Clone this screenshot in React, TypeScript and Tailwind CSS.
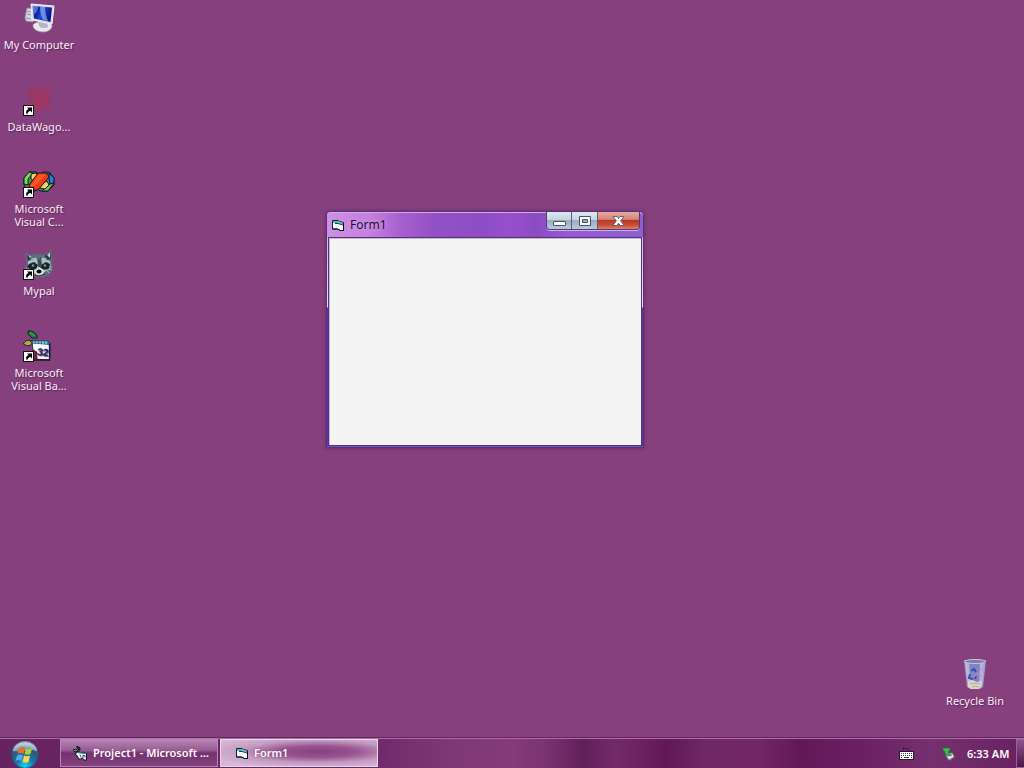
import type { ReactNode } from "react";

function ShortcutArrow() {
  return (
    <g>
      <rect x="0.5" y="21.5" width="10" height="10" fill="#fff" stroke="#111" />
      <path d="M4 23.500h5v5l-1.700-1.700c-2 .8-2.800 2-3 3.700-2-2.300-1.300-4.200 1.200-5.500z" fill="#000" />
    </g>
  );
}

function ComputerIcon() {
  return (
    <svg viewBox="0 0 32 32" className="size-8" aria-hidden="true">
      <defs>
        <linearGradient id="screen" x1="0" x2="1" y2="0.3">
          <stop offset="0" stopColor="#3d62cf" />
          <stop offset="0.3" stopColor="#0a22a4" />
          <stop offset="0.55" stopColor="#1c46d2" />
          <stop offset="1" stopColor="#06188a" />
        </linearGradient>
      </defs>
      <path d="M4 6l6 1v13l-7-1-1-3z" fill="#d5d6e2" stroke="#9d92b0" strokeWidth="0.8" />
      <path d="M4 9l4 1M4 12l4 1M3 16l5 1" stroke="#858297" strokeWidth="0.8" />
      <path d="M10 24c0-3 4-4 9-4s10 1 10 4-4 6-9 6-10-3-10-6z" fill="#e8e8ef" stroke="#a49fb5" strokeWidth="0.7" />
      <path d="M15 19l9 1 1 5c-3 2-8 1-9-1z" fill="#b9b5c4" />
      <path d="M8 2l23 2-2 18L9 18z" fill="#d9dcee" stroke="#f0edf8" />
      <path d="M9.500 4L29 5.500 27.500 20 11 16.500z" fill="url(#screen)" />
      <path d="M17 4.600l5 .4c0 5 1 9 3 14l-5-1c-2-4-3-8-3-13.400z" fill="#a9c4f5" opacity=".6" />
      <path d="M9.500 4l6 .5-2 6-3 2z" fill="#8faaf0" opacity=".5" />
    </svg>
  );
}

function WagonIcon() {
  return (
    <svg viewBox="0 0 32 32" className="size-8" aria-hidden="true">
      <g fill="none" stroke="#b5304a" strokeWidth="1.300" opacity=".65">
        <circle cx="17" cy="16" r="10" strokeDasharray="4 1" />
        <circle cx="17" cy="16" r="6" />
        <path d="M6 6l22 20M28 5L7 26M5 16h24M17 3v26M6 4h20M6 4v6M26 4v5" />
      </g>
      <path d="M8 11l8-6 9 5 2 10-9 7-9-5z" fill="#b02c4a" opacity=".22" />
      <ShortcutArrow />
    </svg>
  );
}

function VisualCIcon() {
  return (
    <svg viewBox="0 0 32 32" className="size-8" aria-hidden="true">
      <g stroke="#14142c" strokeWidth="1" strokeLinejoin="round">
        <path d="M6 6h7l6 5-1 8-6 6H6l-5-6v-7z" fill="#2fa44d" />
        <path d="M20 6h6l5 6v7l-6 6h-8l-5-5 3-8z" fill="#2fa44d" />
        <path d="M6 6l4 1-5 6v6l-4-1v-6z" fill="#7ddc4f" />
        <path d="M26 7l5 5v5l-4 1-1-5z" fill="#2b7cd4" />
        <path d="M31 17l-6 8h-6l6-6 2-1z" fill="#68cf48" />
        <path d="M8 8l5-1 5 5-5 5-5-4z" fill="#f9cf72" />
        <path d="M18 18l6-3 2 4-4 4-6-1z" fill="#f9cf72" />
        <path d="M15 7h9l2 4-11 13H7l-1-5z" fill="#ef3a16" />
      </g>
      <path d="M16 8.500h7L12 20H7.500z" fill="#ff5a25" />
      <ShortcutArrow />
    </svg>
  );
}

function RaccoonIcon() {
  return (
    <svg viewBox="0 0 32 32" className="size-8" aria-hidden="true">
      <path d="M2 5l7 2c5-2 9-1 12 0l7-6 1 9 1 10-4 7-9 3-8-3-5-7z" fill="#5b6e80" />
      <path d="M4 7l5 2-4 5zM22 8l5-5 1 8-4 1z" fill="#253c45" />
      <path d="M5 7l4 2-2 1zM24 7l3-3v6z" fill="#c2cad0" />
      <path d="M5 13l9-3 2 3 3-3 8 3 1 7-8 5-10 1-5-5z" fill="#aebdc2" />
      <path d="M6 16l5-2 4 3-2 4-5 1-4-3zM18 17l5-3 4 2-1 5-6 1-3-2z" fill="#14252c" />
      <path d="M14 9l2 3 2-3 1 8-2 5-2-4z" fill="#394d57" />
      <path d="M11 23l5-4 5 3-1 5-6 1z" fill="#e0e2dc" />
      <ellipse cx="16" cy="23.500" rx="2.500" ry="2" fill="#070c10" />
      <circle cx="10" cy="17.500" r="1.200" fill="#8d9b67" />
      <circle cx="22" cy="17.500" r="1.200" fill="#8d9b67" />
      <path d="M8 11l5-1M19 10l5 1M4 19l-2 3M5 21l-1 3M25 21l4 1M24 23l3 2" stroke="#c9d4d8" strokeWidth="0.7" />
      <path d="M12 27l4 1 6-2" stroke="#24343e" fill="none" />
      <ShortcutArrow />
    </svg>
  );
}

function VisualBasicIcon() {
  return (
    <svg viewBox="0 0 32 32" className="size-8" aria-hidden="true">
      <path d="M5 1h4l5 4v3H9L5 4z" fill="#1d7b3c" stroke="#102020" />
      <path d="M7 3l5 3" stroke="#53aa5b" />
      <path d="M0.500 14c1-4 6-5 9-2-1 4-5 5-9 2z" fill="#b5a746" stroke="#172317" />
      <path d="M9 11l18 2v17l-16-1z" fill="#fafaff" stroke="#152039" strokeWidth=".8" />
      <path d="M7 11h18l2 3.500-18-1.500z" fill="#19a3b7" stroke="#0c2740" strokeWidth=".7" />
      <path d="M11 11v2M14 11v2.500M17 11v2.500M20 11v3M23 11v3" stroke="#e6f6ff" strokeWidth=".8" />
      <path d="M26.500 14v16H12" fill="none" stroke="#111a30" strokeWidth="1.300" />
      <path d="M10 20l4 2v7l-3 2z" fill="#861c3f" stroke="#1b1720" strokeWidth=".7" />
      <text x="14" y="25" transform="rotate(5 14 25)" fontSize="10" fontFamily="Liberation Sans, sans-serif" fontWeight="700" fill="#16205c">32</text>
      <path d="M28 25l4 3-5 2z" fill="#6f4a76" />
      <ShortcutArrow />
    </svg>
  );
}

function RecycleIcon() {
  return (
    <svg viewBox="0 0 32 32" className="size-8" aria-hidden="true">
      <path d="M5 2h22l-3 27-3 2h-9l-4-2z" fill="#a3a2cf" />
      <path d="M7 4h18l-3 24-9 1z" fill="#8285bf" />
      <path d="M6 4l4 1 2 22-3-1zM25 4l-4 1-1 23 3-2z" fill="#c5c0df" opacity=".75" />
      <ellipse cx="16" cy="3.500" rx="10.500" ry="2" fill="#8278a5" stroke="#c9c4de" strokeWidth="1" />
      <path d="M9 23l4-1 5 2 5-1-1 6-3 2h-7l-3-2z" fill="#d9d8ca" />
      <path d="M11 25l3 1 3-1 4 1M13 29l3-1 4 1" stroke="#aaa995" fill="none" />
      <path d="M12 13l3-2 2 3M11 16l-1 4 4 1M17 18l-1 3" fill="none" stroke="#3a4fae" strokeWidth="2" />
      <path d="M23 10l-5 6 4 2M17 17l-3 2" fill="none" stroke="#b98fc7" />
    </svg>
  );
}

function FormIcon() {
  return (
    <svg viewBox="0 0 14 14" className="size-3.5 shrink-0" aria-hidden="true">
      <path d="M1.500 2.500h6l1 1 4 1v8h-3l-3-1.500h-5z" fill="#f7fbff" stroke="#082329" />
      <path d="M2 3h5l1 1 4 1v1.500L7 5H2z" fill="#4db9bd" />
      <path d="M4 5.500h3l5 1.500" fill="none" stroke="#123c45" />
      <path d="M12.500 5v7.500h-3l-3-1.500h-5" fill="none" stroke="#050d15" />
    </svg>
  );
}

function ProjectIcon() {
  return (
    <svg viewBox="0 0 14 16" className="h-4 w-3.5 shrink-0" aria-hidden="true">
      <path d="M4 1l3 2v2L4 3z" fill="#26463b" stroke="#11151b" />
      <path d="M0 5l3-1 2 2-3 1zM6 4v4" fill="#8f9851" stroke="#11151b" />
      <path d="M3.500 7l10 1.500V15h-3l-1-2-2 1H5.500l-1-3-2-1z" fill="#f7f7ff" stroke="#0c1422" />
      <path d="M4 7.500l9 1" stroke="#348698" strokeWidth="1" />
      <path d="M7 9.500l1 3M10 10v3M10 10.500h2v2" fill="none" stroke="#172a3a" strokeWidth=".8" />
    </svg>
  );
}

function WindowsOrb() {
  return (
    <svg viewBox="0 0 30 30" className="size-[30px]" aria-hidden="true">
      <defs>
        <radialGradient id="orb" cx=".5" cy=".9" r=".8">
          <stop offset="0" stopColor="#1ad2ee" />
          <stop offset=".4" stopColor="#1578ae" />
          <stop offset=".8" stopColor="#355272" />
          <stop offset="1" stopColor="#a5c2cc" />
        </radialGradient>
      </defs>
      <circle cx="15" cy="16" r="13.500" fill="url(#orb)" stroke="#284766" />
      <path d="M3 12a12 10 0 0124 0c-8-3-16 2-24 0z" fill="#c2dae1" opacity=".5" />
      <path d="M9 9c2-1.500 4-1.500 6 0l-1.500 6c-2-1.500-4-1.500-6 0z" fill="#ed6936" />
      <path d="M16 9.500c2 1 4 1 6 0L20.500 15c-2 1-4 1-6 0z" fill="#a5d33a" />
      <path d="M7 16.500c2-1.500 4-1.500 6 0L11.500 22c-2-1.500-4-1-6 0z" fill="#53a9ed" />
      <path d="M14 16.500c2 1 4 1 6 0L18.500 23c-2 1-4 1-6 0z" fill="#ffd449" />
    </svg>
  );
}

function DesktopIcon({ children, lines }: { children: ReactNode; lines: string[] }) {
  return (
    <button type="button" className="flex h-[82px] w-[78px] flex-col items-center gap-1 pt-0.5 text-[11px] leading-[13px] whitespace-nowrap text-[#fbeefa] [text-shadow:1px_1px_1px_#572452]">
      {children}
      <span>
        {lines.map((line) => <span key={line} className="block">{line}</span>)}
      </span>
    </button>
  );
}

function FormWindow() {
  return (
    <section aria-label="Form1" className="absolute top-[211px] left-[326px] flex h-[237px] w-[318px] flex-col rounded-t-[5px] border border-[#57307e] bg-[#7548b1] shadow-[0_0_3px_1px_rgba(90,35,95,0.45)]">
      <header className="flex h-[25px] shrink-0 items-start justify-between rounded-t-[4px] bg-[linear-gradient(90deg,#cf90e4_0%,#c37fdc_14%,#a860cf_23%,#9251c4_34%,#8e4dc6_50%,#9850cc_58%,#8a4cc3_66%,#9c59d4_78%,#8e60cd_100%)] pr-[3px] pl-1 shadow-[inset_0_1px_0_#d5aaee]">
        <div className="flex h-[26px] items-center gap-[5px]">
          <FormIcon />
          <h1 className="text-[12px] leading-4 text-[#170c37] [text-shadow:0_0_4px_#dfb1ee]">Form1</h1>
        </div>
        <div className="flex h-[18px] overflow-hidden rounded-b-[4px] border border-t-0 border-[#4b3c73] shadow-[0_1px_0_#cbb3ed]">
          <button type="button" aria-label="Minimize" className="flex w-[25px] items-center justify-center border-r border-[#54627f] bg-[linear-gradient(180deg,#dee8f0_0%,#c6d3e2_45%,#9cacc5_50%,#bac9dc_100%)]">
            <svg viewBox="0 0 13 12" className="h-3 w-[13px]" aria-hidden="true"><rect x="0.500" y="6.500" width="12" height="4" rx="0.500" fill="#fff" stroke="#4b5268" /></svg>
          </button>
          <button type="button" aria-label="Maximize" className="flex w-[26px] items-center justify-center border-r border-[#54627f] bg-[linear-gradient(180deg,#dee8f0_0%,#c6d3e2_45%,#9cacc5_50%,#bac9dc_100%)]">
            <svg viewBox="0 0 12 10" className="h-2.5 w-3" aria-hidden="true"><path d="M.5.5h11v9H.5zM3.500 3.500v3h5v-3z" fill="#fff" fillRule="evenodd" stroke="#4b5268" /></svg>
          </button>
          <button type="button" aria-label="Close" className="flex w-[41px] items-center justify-center bg-[linear-gradient(180deg,#e7aaa0_0%,#d68578_43%,#b73a2b_50%,#c74b34_75%,#e18360_100%)]">
            <svg viewBox="0 0 13 10" className="h-2.5 w-[13px]" aria-hidden="true"><path d="M1 .5h4L6.500 2.500 8 .5h4L8.600 4.800 12.200 9.500H8.200L6.500 7.200 4.800 9.500H.8L4.400 4.800z" fill="#fff" stroke="#55576d" strokeWidth=".9" /></svg>
          </button>
        </div>
      </header>
      <div className="flex min-h-0 flex-1 bg-[linear-gradient(180deg,#d8b8e8_0px,#f0dff5_70px,#6134a5_71px,#6134a5_100%)] px-px">
        <div className="flex flex-1 border border-[#51317d] bg-[#c8b9d8] pt-px pl-px">
          <div className="flex-1 bg-[#f4f4f4]" />
        </div>
      </div>
      <div className="h-px shrink-0 bg-[#7958bd]" />
    </section>
  );
}

function Taskbar() {
  return (
    <footer className="flex h-[30px] shrink-0 items-stretch border-t border-[#ae6cae] bg-[linear-gradient(90deg,#672360_0%,#6e2768_36%,#7f3877_44%,#843a7b_50%,#7c3474_53%,#612058_57%,#732a6b_60%,#621858_65%,#6e2767_69%,#732668_74%,#621858_78%,#6b2064_84%,#76306f_91%,#672060_100%)] text-[11px] leading-4 font-semibold text-white shadow-[0_-1px_0_#62265c]">
      <div className="flex w-[60px] shrink-0 justify-center pr-[10px]">
        <button type="button" aria-label="Start" className="h-[29px] overflow-hidden"><WindowsOrb /></button>
      </div>
      <nav aria-label="Open windows" className="flex gap-0.5 pb-px">
        <button type="button" className="flex w-[158px] items-center gap-1.5 border border-[#b987b7] bg-[linear-gradient(180deg,#b784b3_0%,#965a92_40%,#75306f_50%,#82447d_100%)] pl-3 whitespace-nowrap">
          <ProjectIcon /><span>Project1 - Microsoft ...</span>
        </button>
        <button type="button" className="flex w-[158px] items-center gap-[5px] border border-[#ecd5ec] bg-[radial-gradient(ellipse_at_62%_45%,#85407e_0%,#985391_28%,#c39bc0_55%,#d7b9d6_85%)] pl-3.5 whitespace-nowrap [text-shadow:0_0_2px_#754171]">
          <FormIcon /><span>Form1</span>
        </button>
      </nav>
      <div className="ml-auto flex items-center" aria-label="System tray">
        <svg viewBox="0 0 15 14" className="h-3.5 w-[15px]" aria-hidden="true">
          <path d="M4 3V1h2v1h4v2" fill="none" stroke="#24112d" strokeDasharray="1 1" />
          <rect x=".5" y="4.500" width="14" height="8" fill="#fff" stroke="#211b2d" />
          <path d="M2 6.500h11M2 8.500h11" stroke="#342f3e" strokeDasharray="1 1" />
          <path d="M2 10.500h1M5 10.500h5M12 10.500h1" stroke="#342f3e" />
        </svg>
        <svg viewBox="0 0 14 14" className="ml-7 size-3.5" aria-hidden="true">
          <path d="M3 8l7-3 3 5-6 4z" fill="#a6a2a9" stroke="#4d4b57" strokeWidth=".7" />
          <path d="M6 11l5-2.500" stroke="#ededee" strokeWidth="2" />
          <path d="M1 1l7 0v3L6.500 4c0 3 1 4 3 4.500-5 1-7-1.500-7-4.500L1 4z" fill="#40bd4b" stroke="#1b6931" strokeWidth=".6" />
        </svg>
        <time className="ml-[11px] w-[49px]">6:33 AM</time>
        <button type="button" aria-label="Show desktop" className="h-full w-2 border border-r-0 border-[#98629a] bg-[linear-gradient(180deg,#8b5489,#4f1549)]" />
      </div>
    </footer>
  );
}

export default function App() {
  return (
    <div className="flex h-screen min-h-[480px] flex-col overflow-hidden bg-[#85407d] font-['Noto_Sans',sans-serif] select-none">
      <main className="relative flex min-h-0 flex-1 justify-between">
        <div className="flex flex-col">
          <DesktopIcon lines={["My Computer"]}><ComputerIcon /></DesktopIcon>
          <DesktopIcon lines={["DataWago..."]}><WagonIcon /></DesktopIcon>
          <DesktopIcon lines={["Microsoft", "Visual C..."]}><VisualCIcon /></DesktopIcon>
          <DesktopIcon lines={["Mypal"]}><RaccoonIcon /></DesktopIcon>
          <DesktopIcon lines={["Microsoft", "Visual Ba..."]}><VisualBasicIcon /></DesktopIcon>
        </div>
        <div className="flex flex-col justify-end pr-[10px]">
          <DesktopIcon lines={["Recycle Bin"]}><RecycleIcon /></DesktopIcon>
        </div>
        <FormWindow />
      </main>
      <Taskbar />
    </div>
  );
}
